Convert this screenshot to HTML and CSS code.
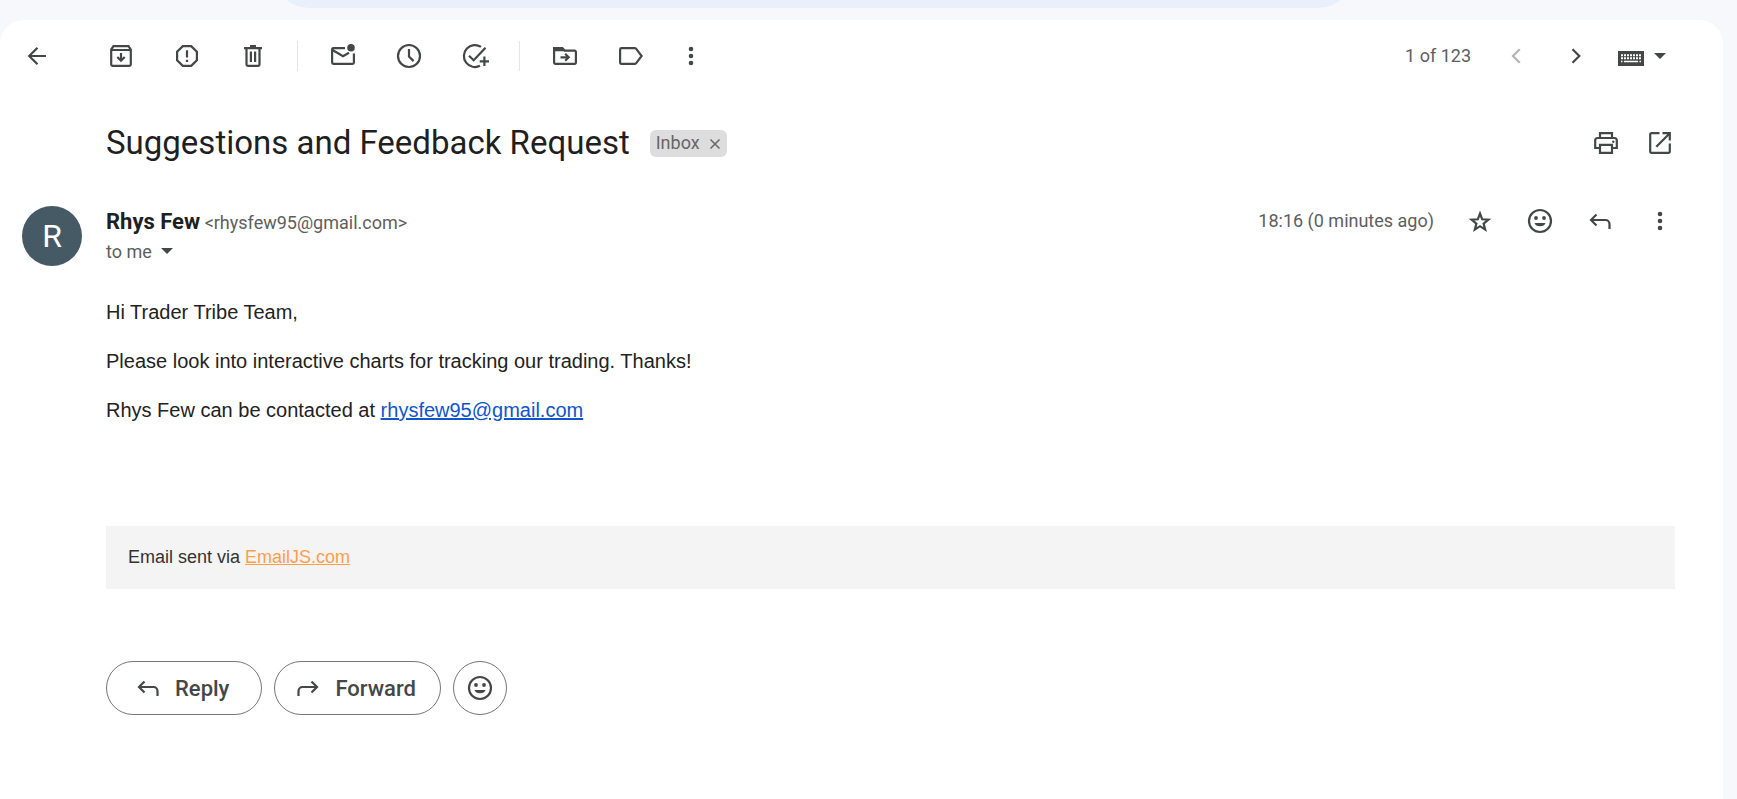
FILE: index.html
```html
<!DOCTYPE html>
<html lang="en">
<head>
<meta charset="utf-8">
<title>Suggestions and Feedback Request</title>
<link rel="stylesheet" href="styles.css">
</head>
<body>
<svg class="symbols" aria-hidden="true">
  <symbol id="smile" viewBox="0 0 30 30"><circle cx="15" cy="15" r="11" fill="none" stroke="currentColor" stroke-width="2.2"/><circle cx="11" cy="12" r="1.900" /><circle cx="19" cy="12" r="1.900"/><path d="M9.500 17h11a5.700 4.500 0 0 1-11 0z"/></symbol>
  <symbol id="more" viewBox="0 0 30 30"><circle cx="15" cy="8" r="2.3"/><circle cx="15" cy="15" r="2.3"/><circle cx="15" cy="22" r="2.3"/></symbol>
  <symbol id="reply" viewBox="0 0 30 30"><path d="M11.500 8.500 6 14l5.500 5.500M6 14h14.500a4 4 0 0 1 4 4v5" fill="none" stroke="currentColor" stroke-width="2.2"/></symbol>
  <symbol id="caret" viewBox="0 0 12 6"><path d="M0 0h12L6 6z"/></symbol>
</svg>
<div class="topbar"><div class="search"></div></div>
<main class="card">
  <div class="toolbar">
    <button class="icon back" aria-label="Back"><svg viewBox="0 0 30 30" class="line"><path d="M15.500 6.700 7.200 15l8.300 8.300M7.200 15H24"/></svg></button>
    <div class="group">
      <button class="icon" aria-label="Archive"><svg viewBox="0 0 30 30" class="line"><path d="M5.200 8.500 7.500 5.200h15l2.300 3.300v15a1.300 1.300 0 0 1-1.300 1.300h-17a1.300 1.300 0 0 1-1.300-1.300zM5.200 9h19.600M15 12v7.500M11.300 16l3.700 3.700 3.700-3.700"/></svg></button>
      <button class="icon" aria-label="Report spam"><svg viewBox="0 0 30 30" class="line"><path d="M10.800 5.100h8.400l5.700 5.700v8.400l-5.700 5.700h-8.400l-5.700-5.700v-8.400zM15 9.200v7.300M15 18.800v2.200"/></svg></button>
      <button class="icon" aria-label="Delete"><svg viewBox="0 0 30 30" class="line"><path d="M6 7.200h18M12 5.200h6M8.500 8v15.500a1.300 1.300 0 0 0 1.300 1.300h10.400a1.300 1.300 0 0 0 1.300-1.300V8M12.900 10.500v10.500M17.100 10.500v10.500"/></svg></button>
    </div>
    <span class="divider"></span>
    <div class="group">
      <button class="icon" aria-label="Mark as unread"><svg viewBox="0 0 30 30" class="line"><path d="M17 7.100H5.400a1.300 1.300 0 0 0-1.300 1.300v13.200a1.300 1.300 0 0 0 1.300 1.300h19.200a1.300 1.300 0 0 0 1.300-1.300V12.500M4.500 9 15 15.200l6-3.500"/><circle class="solid" cx="23" cy="6.800" r="3.800"/></svg></button>
      <button class="icon" aria-label="Snooze"><svg viewBox="0 0 30 30" class="line"><circle cx="15" cy="15" r="11"/><path d="M15 8v7.500l4.600 4.600"/></svg></button>
      <button class="icon" aria-label="Add to tasks"><svg viewBox="0 0 30 30" class="line"><path d="M21 5.900A11 11 0 1 0 20 24.800M9 14.700l4.700 4.500L25.500 6.800M24.400 15.500v9.500M19.700 20.300h9.300"/></svg></button>
    </div>
    <span class="divider"></span>
    <div class="group">
      <button class="icon" aria-label="Move to"><svg viewBox="0 0 30 30" class="line"><path d="M4.100 7.100h8.200l2.400 2.500h9.900a1.300 1.300 0 0 1 1.300 1.300v10.700a1.300 1.300 0 0 1-1.300 1.300H5.400a1.300 1.300 0 0 1-1.300-1.300zM10.500 16.300h8M15.200 12.800l3.500 3.500-3.500 3.500"/><path class="solid" d="M4 7h8l3 3.200H4z"/></svg></button>
      <button class="icon" aria-label="Labels"><svg viewBox="0 0 30 30" class="line"><path d="M5.400 7.100h13.200a2 2 0 0 1 1.600.8L25.600 15l-5.400 7.100a2 2 0 0 1-1.600.8H5.400a1.300 1.300 0 0 1-1.300-1.300V8.400a1.300 1.300 0 0 1 1.300-1.300z"/></svg></button>
    </div>
    <button class="icon overflow" aria-label="More"><svg><use href="#more"/></svg></button>
    <div class="pager">
      <span class="muted count">1 of 123</span>
      <button class="icon" aria-label="Newer" disabled><svg viewBox="0 0 30 30" class="line"><path d="M18.800 8.300 12 15l6.800 6.700"/></svg></button>
      <button class="icon" aria-label="Older"><svg viewBox="0 0 30 30" class="line"><path d="M11.500 8.300 18.300 15l-6.800 6.700"/></svg></button>
      <button class="input-tool" aria-label="Input tools"><svg class="keyboard" viewBox="0 0 30 30"><path d="M2 10h26v15H2z"/><path class="keys" d="M5 14.300h20M5 17.300h20"/><path class="space" d="M5 20.500h1.500M8 20.500h14M23.500 20.500H25"/></svg><svg class="caret"><use href="#caret"/></svg></button>
    </div>
  </div>
  <header class="subject">
    <h1>Suggestions and Feedback Request</h1>
    <span class="chip">Inbox <button aria-label="Remove label Inbox"><svg viewBox="0 0 12 12"><path d="m1.500 2.500 9 9m0-9-9 9"/></svg></button></span>
    <div class="actions">
      <button class="icon" aria-label="Print"><svg viewBox="0 0 30 30" class="line"><path d="M9 10V5.200h12V10M9 20H4.200v-7.500a2.500 2.500 0 0 1 2.500-2.500h16.600a2.500 2.500 0 0 1 2.500 2.500V20H21M9 16.800h12v8H9z"/><circle class="solid" cx="22.300" cy="13.800" r="1.200"/></svg></button>
      <button class="icon" aria-label="Open in new window"><svg viewBox="0 0 30 30" class="line"><path d="M14.500 5.200H6.400a1.200 1.200 0 0 0-1.200 1.200v17.200a1.200 1.200 0 0 0 1.200 1.200h17.200a1.200 1.200 0 0 0 1.200-1.200v-8.100M17.500 5.200h7.300v7.300M24.800 5.200 11.300 18.700"/></svg></button>
    </div>
  </header>
  <article class="message">
    <div class="avatar">R</div>
    <div class="content">
      <div class="sender-row">
        <div class="sender"><strong>Rhys Few</strong> <span class="muted">&lt;rhysfew95@gmail.com&gt;</span></div>
        <span class="muted time">18:16 (0 minutes ago)</span>
        <div class="message-actions">
          <button class="icon" aria-label="Star"><svg viewBox="0 0 30 30" class="line"><path stroke-miterlimit="10" d="m15 7.500 2.200 5.800 6.200.4-4.800 3.900 1.600 6-5.200-3.400-5.200 3.400 1.600-6-4.800-3.900 6.200-.4z"/></svg></button>
          <button class="icon" aria-label="Add reaction"><svg><use href="#smile"/></svg></button>
          <button class="icon" aria-label="Reply"><svg><use href="#reply"/></svg></button>
          <button class="icon" aria-label="More options"><svg><use href="#more"/></svg></button>
        </div>
      </div>
      <button class="recipient muted">to me <svg class="caret"><use href="#caret"/></svg></button>
      <div class="body">
        <p>Hi Trader Tribe Team,</p>
        <p>Please look into interactive charts for tracking our trading. Thanks!</p>
        <p>Rhys Few can be contacted at <a href="mailto:rhysfew95@gmail.com">rhysfew95@gmail.com</a></p>
      </div>
      <footer class="via">Email sent via <a href="#">EmailJS.com</a></footer>
      <div class="replies">
        <button class="pill"><svg><use href="#reply"/></svg>Reply</button>
        <button class="pill"><svg class="flip"><use href="#reply"/></svg>Forward</button>
        <button class="pill round" aria-label="Add reaction"><svg><use href="#smile"/></svg></button>
      </div>
    </div>
  </article>
</main>
</body>
</html>
```
FILE: styles.css
```css
* { box-sizing: border-box; }
body {
  margin: 0;
  min-height: 100vh;
  display: flex;
  flex-direction: column;
  background: #f6f8fc;
  color: #1f1f1f;
  font-family: Roboto, "Open Sans", sans-serif;
  font-size: 18px;
}
button {
  padding: 0;
  border: 0;
  background: none;
  color: inherit;
  font: inherit;
}
svg { display: block; fill: currentColor; }
.symbols { position: absolute; width: 0; height: 0; }
.line { fill: none; stroke: currentColor; stroke-width: 2.2; }
.solid { fill: currentColor; stroke: none; }
.muted { color: #5e5e5e; }

.topbar {
  display: flex;
  align-items: flex-end;
  height: 20px;
  padding: 0 383px 12px 273px;
  overflow: hidden;
}
.search { flex: 1; height: 72px; background: #e9f0fb; border-radius: 36px; }

.card {
  flex: 1;
  margin-right: 14px;
  padding: 0 48px 0 22px;
  background: #fff;
  border-radius: 24px 24px 0 0;
}
.icon { flex: none; width: 30px; height: 30px; color: #444746; }
.icon svg { width: 30px; height: 30px; }
.icon:disabled { color: #b4b5b5; }
.caret { width: 12px; height: 6px; color: #444746; }

.toolbar { display: flex; align-items: center; height: 72px; }
.back { margin-right: 54px; }
.group { display: flex; gap: 36px; }
.overflow { margin-left: 30px; }
.divider { width: 1px; height: 30px; margin: 0 30px 0 29px; background: #e4e5e6; }
.pager { display: flex; align-items: center; gap: 30px; margin-left: auto; padding-right: 9px; }
.input-tool { display: flex; align-items: center; gap: 8px; margin-left: -5px; color: #444746; }
.keyboard { width: 30px; height: 30px; }
.keys { fill: none; stroke: #fff; stroke-width: 2; stroke-dasharray: 2 1; }
.space { fill: none; stroke: #fff; stroke-width: 1.5; }

.subject { display: flex; align-items: center; height: 102px; padding-left: 84px; }
h1 { margin: 0; font-size: 33px; font-weight: 400; line-height: 42px; }
.chip {
  display: flex;
  align-items: center;
  gap: 9px;
  height: 27px;
  margin-left: 20px;
  padding: 0 6px 1px;
  border-radius: 6px;
  background: #ddd;
  color: #666;
}
.chip svg { width: 12px; height: 12px; stroke: #666; stroke-width: 1.5; }
.actions { display: flex; gap: 24px; margin-left: auto; }

.message { display: flex; gap: 24px; }
.avatar {
  flex: none;
  display: grid;
  place-items: center;
  width: 60px;
  height: 60px;
  margin-top: 12px;
  border-radius: 50%;
  background: #455a64;
  color: #fff;
  font-size: 32px;
}
.content { flex: 1; }
.sender-row { display: flex; align-items: center; height: 54px; }
.sender strong { font-size: 22px; font-weight: 700; }
.time { margin-left: auto; }
.count, .time { padding-bottom: 2px; }
.message-actions { display: flex; gap: 30px; margin-left: 31px; }
.recipient { display: flex; align-items: center; gap: 9px; height: 6px; }
.body { padding-top: 43px; font: 20px/30px "Liberation Sans", Arial, sans-serif; color: #222; }
.body p { margin: 0 0 19px; }
.body a { color: #15c; }
.via {
  margin-top: 101px;
  padding: 16px 22px 17px;
  background: #f4f4f4;
  color: #333;
  font: 18px/30px "Liberation Sans", Arial, sans-serif;
}
.via a { color: #ff9f4a; }
.replies { display: flex; gap: 12px; margin-top: 72px; }
.pill {
  display: flex;
  align-items: center;
  gap: 12px;
  height: 54px;
  padding: 0 32px 0 26px;
  border: 1px solid #747775;
  border-radius: 27px;
  color: #444746;
  font-size: 22px;
  font-weight: 500;
}
.pill + .pill { padding: 0 24px 0 18px; }
.pill svg { width: 30px; height: 30px; }
.pill.round { width: 54px; padding: 0; justify-content: center; }
.flip { transform: scaleX(-1); }
```
